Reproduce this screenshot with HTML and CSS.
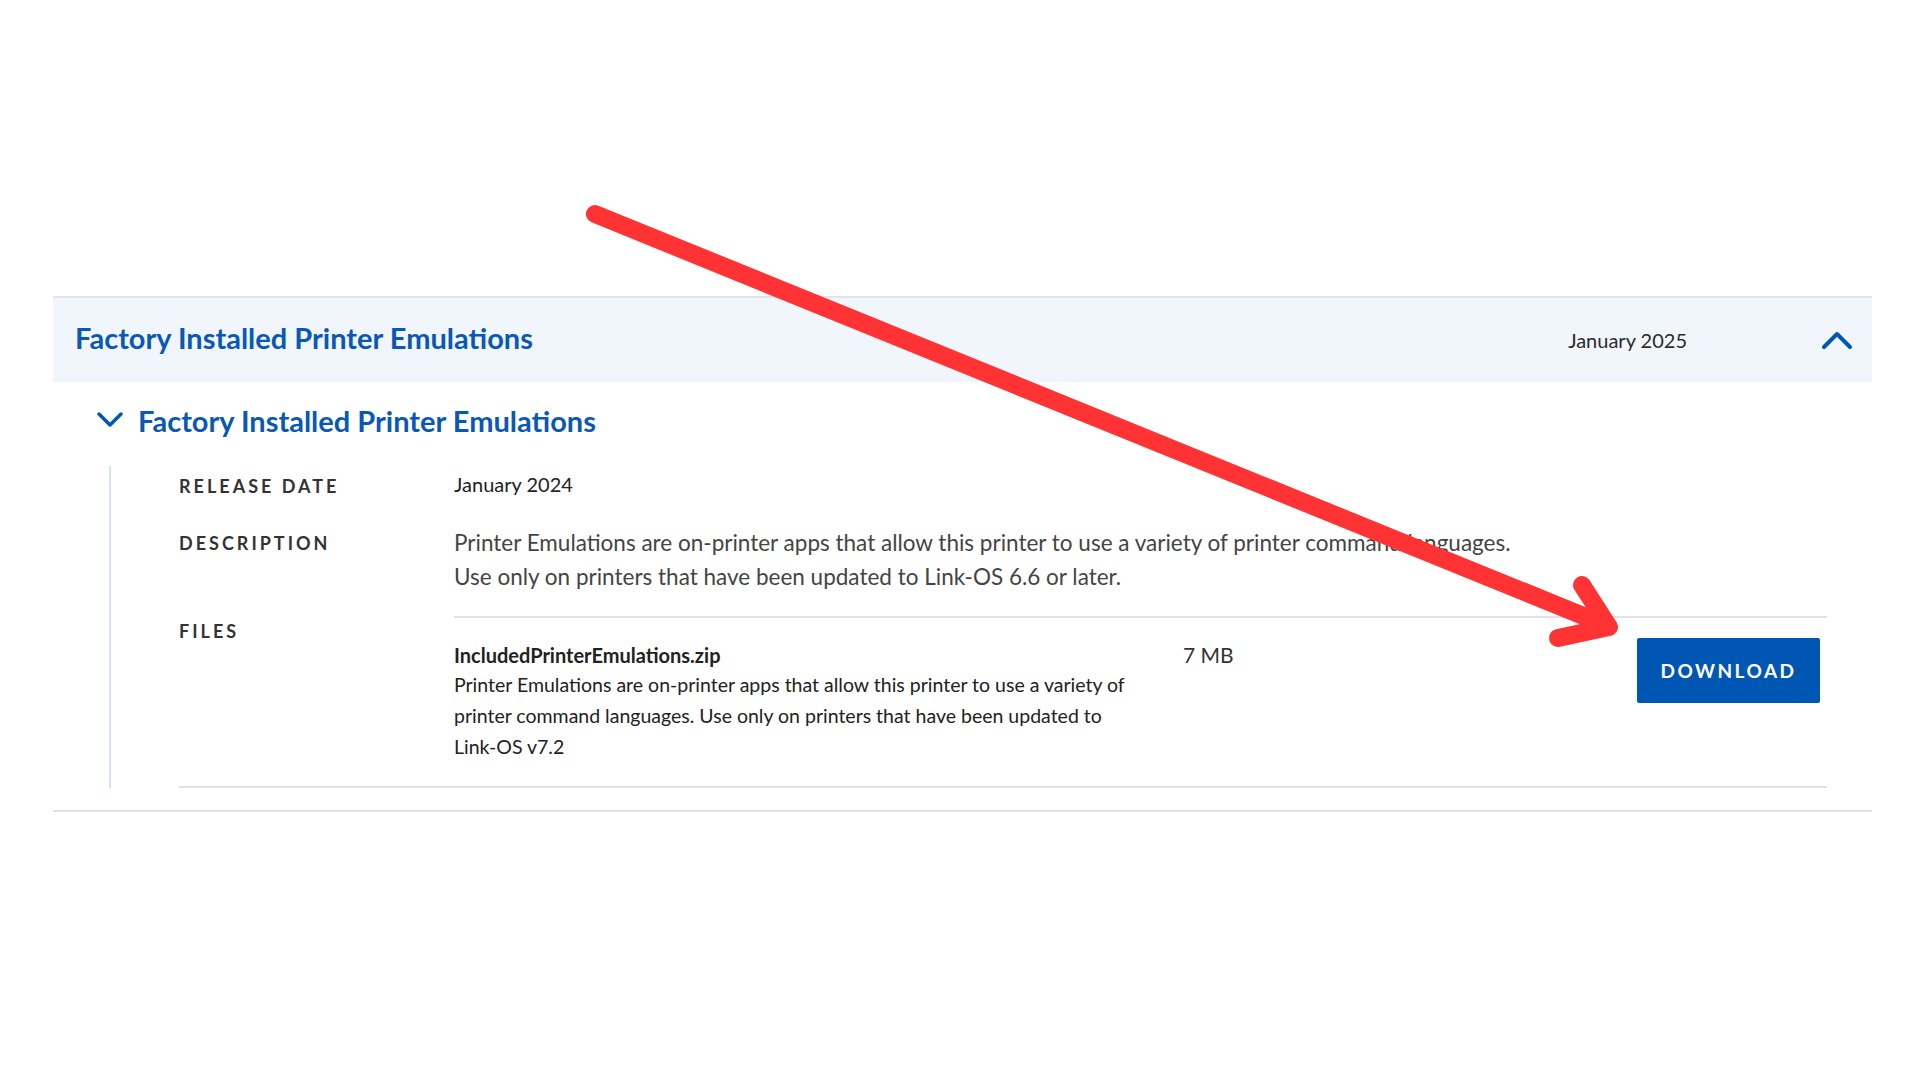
FILE: index.html
```html
<!DOCTYPE html>
<html lang="en">

<head>
    <meta charset="UTF-8">
    <meta name="viewport" content="width=device-width, initial-scale=1.0">
    <title>Factory Installed Printer Emulations</title>
    <link rel="stylesheet" href="styles.css">
</head>

<body>
    <div class="page">
        <div class="acc">
            <div class="acc_head">
                <h2 class="acc_title">Factory Installed Printer Emulations</h2>
                <span class="acc_date">January 2025</span>
                <svg class="chev_up" width="32" height="20" viewBox="0 0 32 20">
                    <path d="M3 17 L16 4 L29 17" fill="none" stroke="#0057b3" stroke-width="4" stroke-linecap="round" stroke-linejoin="round"/>
                </svg>
            </div>

            <div class="acc_body">
                <div class="sub_head">
                    <svg class="chev_down" width="28" height="18" viewBox="0 0 28 18">
                        <path d="M3 3 L14 14 L25 3" fill="none" stroke="#0057b3" stroke-width="3.5" stroke-linecap="round" stroke-linejoin="round"/>
                    </svg>
                    <h3 class="sub_title">Factory Installed Printer Emulations</h3>
                </div>

                <div class="details">
                    <div class="details_inner">
                        <div class="row">
                            <div class="label">Release Date</div>
                            <div class="value">January 2024</div>
                        </div>
                        <div class="row">
                            <div class="label label_tall">Description</div>
                            <div class="value value_desc">
                                Printer Emulations are on-printer apps that allow this printer to use a variety of printer command languages.<br>
                                Use only on printers that have been updated to Link-OS 6.6 or later.
                            </div>
                        </div>
                        <div class="row row_files">
                            <div class="label label_files">Files</div>
                            <div class="files">
                                <div class="file">
                                    <div class="file_info">
                                        <div class="file_name">IncludedPrinterEmulations.zip</div>
                                        <p class="file_desc">Printer Emulations are on-printer apps that allow this printer to use a variety of printer command languages. Use only on printers that have been updated to Link-OS v7.2</p>
                                    </div>
                                    <div class="file_size">7 MB</div>
                                    <button class="btn_download">Download</button>
                                </div>
                            </div>
                        </div>
                    </div>
                </div>
            </div>
        </div>
    </div>

    <!-- red pointer drawn over the page -->
    <svg class="pointer" width="1920" height="1080" viewBox="0 0 1920 1080">
        <g fill="none" stroke="#ff3333" stroke-width="18" stroke-linecap="round" stroke-linejoin="round">
            <path d="M595 214 L1608 626"/>
            <path d="M1582 585 L1609 627 L1558 638"/>
        </g>
    </svg>
</body>

</html>
```

FILE: styles.css
```css
* {
    margin: 0;
    padding: 0;
    box-sizing: border-box;
}

body {
    background: #fff;
    font-family: Lato, "Open Sans", sans-serif;
    color: #333;
}

.page {
    padding: 296px 48px 0 53px;
}

.acc {
    border-top: 2px solid #e1e3e6;
    border-bottom: 2px solid #e1e3e6;
}

.acc_head {
    height: 84px;
    background: #f1f6fc;
    display: flex;
    align-items: center;
    padding: 0 19px 0 22px;
}

.acc_title {
    flex: 1;
    font-size: 29px;
    font-weight: 700;
    color: #0a58b5;
    margin-top: -6px;
}

.acc_date {
    font-size: 20px;
    color: #2b2b2b;
    margin-right: 134px;
}

.chev_up {
    display: block;
}

.acc_body {
    padding: 22px 45px 22px 0;
}

.sub_head {
    display: flex;
    align-items: center;
    height: 32px;
    padding-left: 43px;
    margin-bottom: 30px;
}

.chev_down {
    display: block;
    margin-right: 14px;
}

.sub_title {
    font-size: 29px;
    font-weight: 700;
    color: #0a58b5;
}

.details {
    margin-left: 56px;
    border-left: 2px solid #d5e3f4;
    padding-left: 68px;
}

.details_inner {
    border-bottom: 2px solid #e1e3e6;
    padding-top: 4px;
}

.row {
    display: grid;
    grid-template-columns: 275px 1fr;
    margin-bottom: 26px;
}

.row_files {
    margin-bottom: 0;
}

.label {
    font-size: 18px;
    font-weight: 700;
    letter-spacing: 3px;
    text-transform: uppercase;
    line-height: 28px;
    padding-top: 2px;
    color: #333;
}

.label_tall {
    line-height: 34px;
    padding-top: 0;
}

.label_files {
    padding-top: 1px;
}

.value {
    font-size: 20px;
    line-height: 28px;
    color: #222;
}

.value_desc {
    font-size: 22.5px;
    line-height: 34px;
    color: #444;
    margin-bottom: -4px;
}

.files {
    border-top: 2px solid #e1e3e6;
}

.file {
    display: flex;
    align-items: flex-start;
    padding: 20px 7px 24px 0;
}

.file_info {
    flex: 0 0 682px;
    padding-top: 3px;
}

.file_name {
    font-size: 20px;
    font-weight: 700;
    line-height: 28px;
    color: #222;
}

.file_desc {
    font-size: 19.5px;
    line-height: 31px;
    color: #222;
}

.file_size {
    flex: 1;
    padding: 3px 0 0 47px;
    font-size: 21px;
    line-height: 28px;
    color: #333;
}

.btn_download {
    width: 183px;
    height: 65px;
    border: 0;
    border-radius: 2px;
    background-color: #0057b3;
    color: #fff;
    font-family: Lato, "Open Sans", sans-serif;
    font-size: 19px;
    font-weight: 700;
    letter-spacing: 2.5px;
    text-transform: uppercase;
}

.pointer {
    position: absolute;
    left: 0;
    top: 0;
    pointer-events: none;
}
```
